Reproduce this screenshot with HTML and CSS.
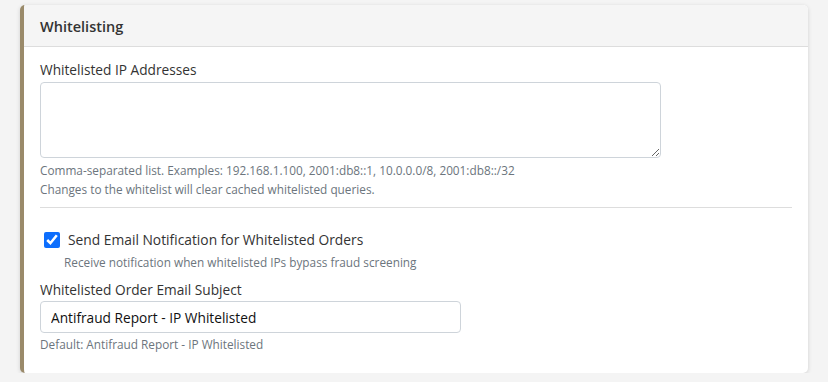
FILE: index.html
```html
<!DOCTYPE html>
<html lang="en">
<head>
  <meta charset="UTF-8" />
  <meta name="viewport" content="width=device-width, initial-scale=1.0"/>
  <title>Whitelisting</title>
  <link rel="stylesheet" href="styles.css">
</head>
<body>
  <div class="card">
    <div class="card-header">Whitelisting</div>
    <div class="card-body">
      <label class="field-label" for="ips">Whitelisted IP Addresses</label>
      <textarea id="ips" rows="4"></textarea>
      <div class="help">Comma-separated list. Examples: 192.168.1.100, 2001:db8::1, 10.0.0.0/8, 2001:db8::/32</div>
      <div class="help">Changes to the whitelist will clear cached whitelisted queries.</div>

      <hr class="divider" />

      <div class="check-row">
        <input type="checkbox" id="notify" checked />
        <label for="notify">Send Email Notification for Whitelisted Orders</label>
      </div>
      <div class="help check-help">Receive notification when whitelisted IPs bypass fraud screening</div>

      <label class="field-label tight" for="subject">Whitelisted Order Email Subject</label>
      <input type="text" id="subject" class="text-input" value="Antifraud Report - IP Whitelisted" />
      <div class="help">Default: Antifraud Report - IP Whitelisted</div>
    </div>
  </div>
</body>
</html>
```

FILE: styles.css
```css
body {
  font-family: 'Open Sans', 'Noto Sans', sans-serif;
  background: #f4f4f4;
  margin: 0;
  padding: 5px 20px 0 20px;
  color: #333;
}
.card {
  background: #ffffff;
  border-left: 4px solid #9a8a6a;
  border-radius: 5px;
  box-shadow: 0 1px 4px rgba(0, 0, 0, 0.15);
  width: 784px;
  overflow: hidden;
}
.card-header {
  background: #f5f5f5;
  border-bottom: 1px solid #dddddd;
  padding: 12px 16px 10px;
  font-size: 14.5px;
  font-weight: 600;
  color: #333;
}
.card-body {
  padding: 13px 16px 19px;
}
.field-label {
  display: block;
  font-size: 13.7px;
  margin-bottom: 3px;
  color: #333;
}
.field-label.tight {
  margin-bottom: 2px;
}
textarea {
  display: block;
  width: 621px;
  height: 76px;
  box-sizing: border-box;
  border: 1px solid #ced4da;
  border-radius: 4px;
  margin: 0 0 3px;
  font-family: inherit;
}
.help {
  font-size: 11.8px;
  color: #6c757d;
  line-height: 19px;
}
.divider {
  border: none;
  border-top: 1px solid #dddddd;
  margin: 8px 0 22px;
}
.check-row {
  display: flex;
  align-items: center;
  gap: 8px;
  padding-left: 4px;
}
.check-row input {
  width: 16px;
  height: 16px;
  margin: 0;
  accent-color: #0d6efd;
}
.check-row label {
  font-size: 13.8px;
  color: #333;
}
.check-help {
  padding-left: 24px;
  margin-top: 4px;
  margin-bottom: 8px;
}
.text-input {
  display: block;
  width: 421px;
  height: 32px;
  box-sizing: border-box;
  border: 1px solid #ced4da;
  border-radius: 4px;
  padding: 0 10px;
  font-family: inherit;
  font-size: 13.7px;
  color: #111;
  margin: 0 0 2px;
}
```
